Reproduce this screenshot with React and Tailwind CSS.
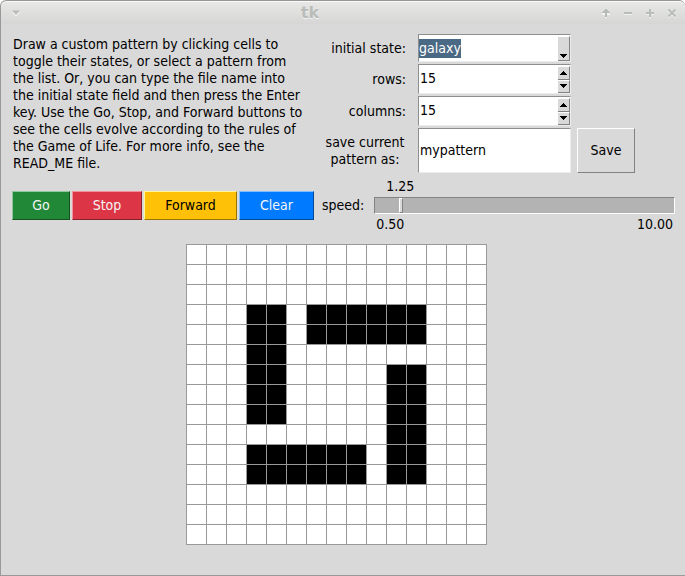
import { useEffect, useRef, useState } from "react";

const SIZE = 15;

const GALAXY = [
  "...............",
  "...............",
  "...............",
  "...##.######...",
  "...##.######...",
  "...##..........",
  "...##.....##...",
  "...##.....##...",
  "...##.....##...",
  "..........##...",
  "...######.##...",
  "...######.##...",
  "...............",
  "...............",
  "...............",
];

const sunken = "flex border border-t-[#8e8e8e] border-l-[#8e8e8e] border-r-[#ececec] border-b-[#ececec] bg-white";
const raised = "border border-t-white border-l-white border-r-[#828282] border-b-[#828282] bg-[#d9d9d9]";

function Arrow({ up }) {
  return (
    <svg width="7" height="4" viewBox="0 0 7 4" shapeRendering="crispEdges" aria-hidden="true">
      <path d={up ? "M3 0h1v1h1v1h1v1h1v1H0V3h1V2h1V1h1z" : "M0 0h7v1H6v1H5v1H4v1H3V3H2V2H1V1H0z"} />
    </svg>
  );
}

function Spinner({ id, label, value, onChange }) {
  return (
    <>
      <label htmlFor={id} className="text-right">{label}</label>
      <div className={`${sunken} h-[30px]`}>
        <input
          id={id}
          value={value}
          onChange={(e) => onChange(Number(e.target.value) || 0)}
          className="min-w-0 flex-1 px-px pb-0.5 outline-none"
        />
        <div className="flex w-3 flex-col pt-px">
          <button type="button" aria-label={`increase ${label}`} onClick={() => onChange(value + 1)} className={`${raised} flex flex-1 items-center justify-center border-l-0`}>
            <Arrow up />
          </button>
          <button type="button" aria-label={`decrease ${label}`} onClick={() => onChange(value - 1)} className={`${raised} flex flex-1 items-center justify-center border-l-0`}>
            <Arrow />
          </button>
        </div>
      </div>
    </>
  );
}

function TitleBar() {
  const control = "flex size-[10px] items-center justify-center";
  return (
    <header className="flex h-6 items-center rounded-t-md border-t border-[#959595] bg-linear-to-b from-[#e8e8e6] to-[#d6d6d6] pr-2 pl-2.5 text-[#b9bdb9] shadow-[inset_0_1px_0_#fafafa]">
      <button type="button" aria-label="Window menu" className={control}>
        <svg width="10" height="8" viewBox="0 0 10 8">
          <path d="M1 3h8L5 7.5z" fill="#f6f6f6" />
          <path d="M1 1.500h8L5 6z" fill="#b9bdb9" />
        </svg>
      </button>
      <h1 className="flex-1 pr-0.5 text-center font-['DejaVu_Sans',sans-serif] text-base font-bold [text-shadow:0_1px_0_#f2f2f2]">tk</h1>
      <div className="flex gap-3">
        <button type="button" aria-label="Shade" className={control}>
          <svg width="10" height="10" viewBox="0 0 10 10" shapeRendering="crispEdges">
            <path d="M4 2h2v1h1v1h1v1h1v2H6v3H4V7H1V5h1V4h1V3h1z" fill="#f2f2f2" />
            <path d="M4 1h2v1h1v1h1v1h1v1H6v4H4V5H1V4h1V3h1V2h1z" fill="currentColor" />
          </svg>
        </button>
        <button type="button" aria-label="Minimize" className={control}>
          <svg width="10" height="10" viewBox="0 0 10 10" shapeRendering="crispEdges">
            <path d="M1 6h8v1H1z" fill="#f2f2f2" />
            <path d="M1 4h8v2H1z" fill="currentColor" />
          </svg>
        </button>
        <button type="button" aria-label="Maximize" className={control}>
          <svg width="10" height="10" viewBox="0 0 10 10" shapeRendering="crispEdges">
            <path d="M4 2h2v3h3v2H6v3H4V7H1V5h3z" fill="#f2f2f2" />
            <path d="M4 1h2v3h3v2H6v3H4V6H1V4h3z" fill="currentColor" />
          </svg>
        </button>
        <button type="button" aria-label="Close" className={control}>
          <svg width="10" height="10" viewBox="0 0 10 10" strokeWidth="2">
            <path d="M1.500 2.500l7 7M8.500 2.500l-7 7" stroke="#f2f2f2" />
            <path d="M1.500 1.500l7 7M8.500 1.500l-7 7" stroke="currentColor" />
          </svg>
        </button>
      </div>
    </header>
  );
}

export default function App() {
  const [pattern, setPattern] = useState("galaxy");
  const [rows, setRows] = useState(SIZE);
  const [columns, setColumns] = useState(SIZE);
  const [name, setName] = useState("mypattern");
  const [speed, setSpeed] = useState(1.25);
  const [cells, setCells] = useState(() => GALAXY.map((r) => [...r].map((c) => c === "#")));
  const stateRef = useRef(null);

  useEffect(() => {
    stateRef.current.focus();
    stateRef.current.select();
  }, []);

  const toggle = (r, c) =>
    setCells(cells.map((row, y) => row.map((on, x) => (y === r && x === c ? !on : on))));

  return (
    <div className="flex min-h-screen flex-col rounded-t-md border-b border-l border-[#999] bg-[#d9d9d9] font-['DejaVu_Sans_Condensed','DejaVu_Sans',sans-serif] text-sm leading-[17px] text-black">
      <TitleBar />
      <main className="flex flex-1 flex-col pt-2.5 pr-2.5 pl-[11px]">
        <div className="flex items-start">
          <p className="w-[304px] pt-0.5 pr-[9px] pl-px">
            Draw a custom pattern by clicking cells to toggle their states, or select a pattern from the list. Or, you can type the file name into the initial state field and then press the Enter key. Use the Go, Stop, and Forward buttons to see the cells evolve according to the rules of the Game of Life. For more info, see the READ_ME file.
          </p>
          <div className="flex flex-col gap-0.5">
            <div className="grid grid-cols-[90px_153px] items-center gap-x-3 gap-y-0.5">
              <label htmlFor="state" className="text-right">initial state:</label>
              <div className={`${sunken} h-7`}>
                <input
                  id="state"
                  ref={stateRef}
                  value={pattern}
                  onChange={(e) => setPattern(e.target.value)}
                  className="min-w-0 flex-1 leading-[19px] outline-none selection:bg-[#4a6984] selection:text-white"
                />
                <button type="button" aria-label="Show patterns" className={`${raised} mt-px flex w-3 items-end justify-center border-l-0 pb-0.5`}>
                  <Arrow />
                </button>
              </div>
              <Spinner id="rows" label="rows:" value={rows} onChange={setRows} />
              <Spinner id="columns" label="columns:" value={columns} onChange={setColumns} />
            </div>
            <div className="flex items-center">
              <label htmlFor="name" className="w-[90px] pl-2 text-center">save current pattern as:</label>
              <div className={`${sunken} ml-3 h-[45px] w-[153px]`}>
                <input id="name" value={name} onChange={(e) => setName(e.target.value)} className="min-w-0 flex-1 px-px outline-none" />
              </div>
              <button type="button" className={`${raised} ml-1.5 h-[45px] w-[58px]`}>Save</button>
            </div>
          </div>
        </div>
        <div className="flex items-center pt-[5px]">
          <div className="flex gap-0.5 text-[#f4f4f4]">
            <button type="button" className="h-[29px] w-[58px] border border-t-[#8fc79d] border-r-[#14521f] border-b-[#14521f] border-l-[#8fc79d] bg-[#218838]">Go</button>
            <button type="button" className="h-[29px] w-[70px] border border-t-[#f1909a] border-r-[#84202a] border-b-[#84202a] border-l-[#f1909a] bg-[#dc3545]">Stop</button>
            <button type="button" className="h-[29px] w-[93px] border border-t-[#fff59a] border-r-[#997404] border-b-[#997404] border-l-[#fff59a] bg-[#ffc107] text-black">Forward</button>
            <button type="button" className="h-[29px] w-[75px] border border-t-[#7fbdff] border-r-[#004a99] border-b-[#004a99] border-l-[#7fbdff] bg-[#007bff]">Clear</button>
          </div>
          <label htmlFor="speed" className="pl-2">speed:</label>
          <div className="ml-2.5 flex flex-1 flex-col gap-0.5">
            <output htmlFor="speed" className="pl-3">{speed.toFixed(2)}</output>
            <input
              id="speed"
              type="range"
              min="0.5"
              max="10"
              step="0.05"
              value={speed}
              onChange={(e) => setSpeed(Number(e.target.value))}
              className="h-[17px] w-full appearance-none border border-t-[#828282] border-r-white border-b-white border-l-[#828282] bg-[#b3b3b3] outline-none [&::-webkit-slider-thumb]:h-[15px] [&::-webkit-slider-thumb]:w-1 [&::-webkit-slider-thumb]:appearance-none [&::-webkit-slider-thumb]:border [&::-webkit-slider-thumb]:border-t-white [&::-webkit-slider-thumb]:border-r-[#828282] [&::-webkit-slider-thumb]:border-b-[#828282] [&::-webkit-slider-thumb]:border-l-white [&::-webkit-slider-thumb]:bg-[#d9d9d9]"
            />
            <div className="flex justify-between px-0.5">
              <span>0.50</span>
              <span>10.00</span>
            </div>
          </div>
        </div>
        <div className="mt-[11px] mr-3.5 mb-[30px] grid grid-cols-[repeat(15,19px)] gap-px self-center border border-[#999] bg-[#999]">
          {cells.map((row, r) =>
            row.map((on, c) => (
              <button
                key={`${r}-${c}`}
                type="button"
                aria-label={`cell ${r + 1}, ${c + 1}`}
                aria-pressed={on}
                onClick={() => toggle(r, c)}
                className={`size-[19px] ${on ? "bg-black" : "bg-white"}`}
              />
            ))
          )}
        </div>
      </main>
    </div>
  );
}
